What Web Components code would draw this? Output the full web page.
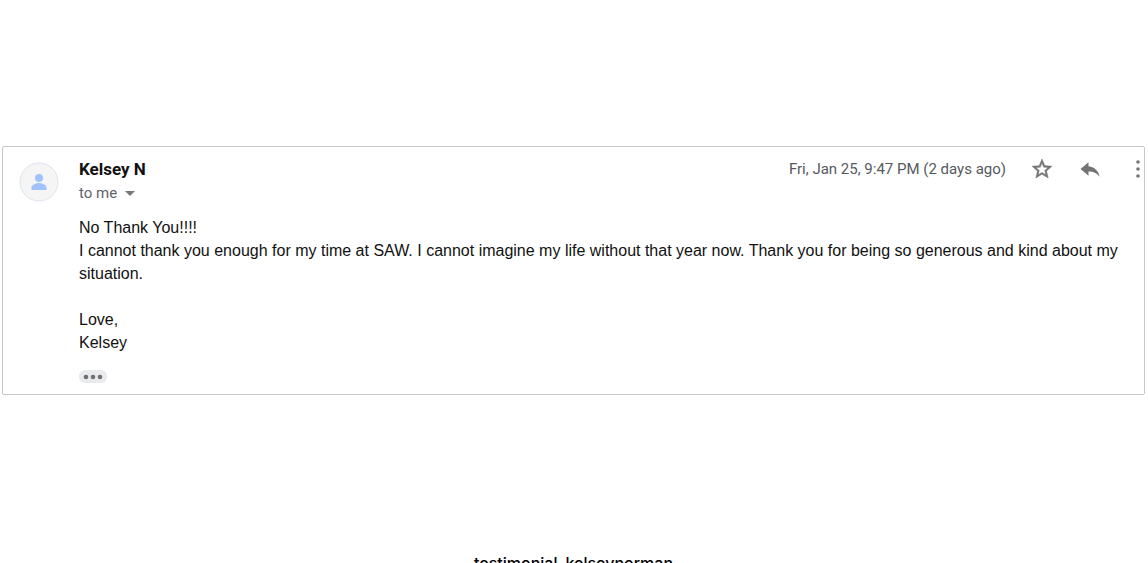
<!DOCTYPE html>
<html lang="en">
<head>
<meta charset="utf-8">
<title>Testimonial</title>
<style>
  html { height: 100%; overflow: hidden; background: #fff; }
  body { margin: 0; height: 100%; overflow: hidden; font-family: "Liberation Sans", Arial, sans-serif; font-size: 16px; color: #111; }
</style>
</head>
<body>
<testimonial-figure>
  <mail-message>
    <user-avatar slot="avatar"></user-avatar>
    <span slot="sender">Kelsey N</span>
    <span slot="recipient">to me</span>
    <span slot="date">Fri, Jan 25, 9:47 PM (2 days ago)</span>
    <mail-actions slot="actions"></mail-actions>
    <div>No Thank You!!!!</div>
    <div>I cannot thank you enough for my time at SAW. I cannot imagine my life without that year now. Thank you for being so generous and kind about my situation.</div>
    <br>
    <div>Love,</div>
    <div>Kelsey</div>
  </mail-message>
  <span slot="caption">testimonial_kelseynorman</span>
</testimonial-figure>

<script>
class BaseElement extends HTMLElement {
  constructor() {
    super();
    this.attachShadow({ mode: "open" }).innerHTML = this.constructor.markup;
  }
}

customElements.define("testimonial-figure", class extends BaseElement {
  static markup = `
    <style>
      :host { display: block; padding: 146px 3px 0 2px; }
      figure { margin: 0; }
      figcaption { margin-top: 156px; text-align: center; color: #000; font: 500 16px/24px Inter, sans-serif; }
    </style>
    <figure>
      <slot></slot>
      <figcaption><slot name="caption"></slot></figcaption>
    </figure>`;
});

customElements.define("user-avatar", class extends BaseElement {
  static markup = `
    <style>
      :host { display: block; }
      svg { display: block; width: 40px; height: 40px; }
    </style>
    <svg viewBox="0 0 40 40" role="img" aria-label="Profile picture">
      <circle cx="20" cy="20" r="19" fill="#f5f5f5" stroke="#dde3ee"/>
      <circle cx="20" cy="16" r="4" fill="#a1c2fa"/>
      <path d="M12.500 28v-2.400c0-3 4.800-4.600 7.500-4.600s7.500 1.600 7.500 4.600V28z" fill="#a1c2fa"/>
    </svg>`;
});

customElements.define("mail-actions", class extends BaseElement {
  static markup = `
    <style>
      :host { display: flex; align-items: center; gap: 24px; }
      button { padding: 0; border: 0; background: none; color: #747474; }
      svg { display: block; width: 24px; height: 24px; fill: currentColor; }
      .more { padding-left: 8px; }
      .more svg { width: 8px; }
    </style>
    <button type="button" aria-label="Star"><svg viewBox="0 0 24 24"><path stroke="currentColor" stroke-width=".5" d="M22 9.240l-7.190-.620L12 2 9.190 8.630 2 9.240l5.460 4.730L5.820 21 12 17.270 18.180 21l-1.630-7.030L22 9.240zM12 15.400l-3.760 2.270 1-4.280-3.320-2.880 4.380-.380L12 6.100l1.710 4.040 4.380.380-3.320 2.880 1 4.280L12 15.400z"/></svg></button>
    <button type="button" aria-label="Reply"><svg viewBox="0 0 24 24"><path d="M10.500 9.300V5.200L2.500 12l8 6.800v-4.300c4.500 0 8 1.300 11.200 5.300-1-5-4.500-9.800-11.200-10.500z"/></svg></button>
    <button type="button" class="more" aria-label="More"><svg viewBox="0 0 8 24"><circle cx="4" cy="5" r="1.800"/><circle cx="4" cy="12" r="1.800"/><circle cx="4" cy="19" r="1.800"/></svg></button>`;
});

customElements.define("mail-message", class extends BaseElement {
  static markup = `
    <style>
      :host { display: block; border: 1px solid #c8c8c8; border-radius: 2px; background: #fff; }
      article { display: grid; grid-template-columns: 40px minmax(0, 1fr); column-gap: 20px; padding: 10px 0 11px 16px; }
      .avatar { padding-top: 5px; }
      header { display: flex; align-items: flex-start; justify-content: space-between; padding-right: 2px; font-family: Roboto, sans-serif; font-size: 15px; line-height: 24px; }
      h2 { margin: 0; font-size: 17px; font-weight: 700; line-height: 24px; color: #111; }
      .to { display: flex; align-items: center; gap: 8px; padding: 0; border: 0; background: none; font: 15px/24px Roboto, sans-serif; color: #5f6368; }
      .to svg { width: 10px; height: 5px; fill: #777; }
      .meta { display: flex; align-items: center; gap: 24px; color: #555a61; }
      .body { margin-top: 11px; padding-right: 16px; line-height: 23px; }
      .trimmed { display: flex; align-items: center; justify-content: center; width: 28px; height: 13px; margin-top: 16px; padding: 0; border: 0; border-radius: 6px; background: #e8eaed; }
      .trimmed svg { width: 20px; height: 6px; fill: #707070; }
    </style>
    <article>
      <div class="avatar"><slot name="avatar"></slot></div>
      <div>
        <header>
          <div>
            <h2><slot name="sender"></slot></h2>
            <button type="button" class="to"><slot name="recipient"></slot><svg viewBox="0 0 10 5" aria-hidden="true"><path d="M0 0h10L5 5z"/></svg></button>
          </div>
          <div class="meta"><slot name="date"></slot><slot name="actions"></slot></div>
        </header>
        <div class="body"><slot></slot></div>
        <button type="button" class="trimmed" aria-label="Show trimmed content"><svg viewBox="0 0 20 6"><circle cx="3" cy="3" r="2.300"/><circle cx="10" cy="3" r="2.300"/><circle cx="17" cy="3" r="2.300"/></svg></button>
      </div>
    </article>`;
});
</script>
</body>
</html>
